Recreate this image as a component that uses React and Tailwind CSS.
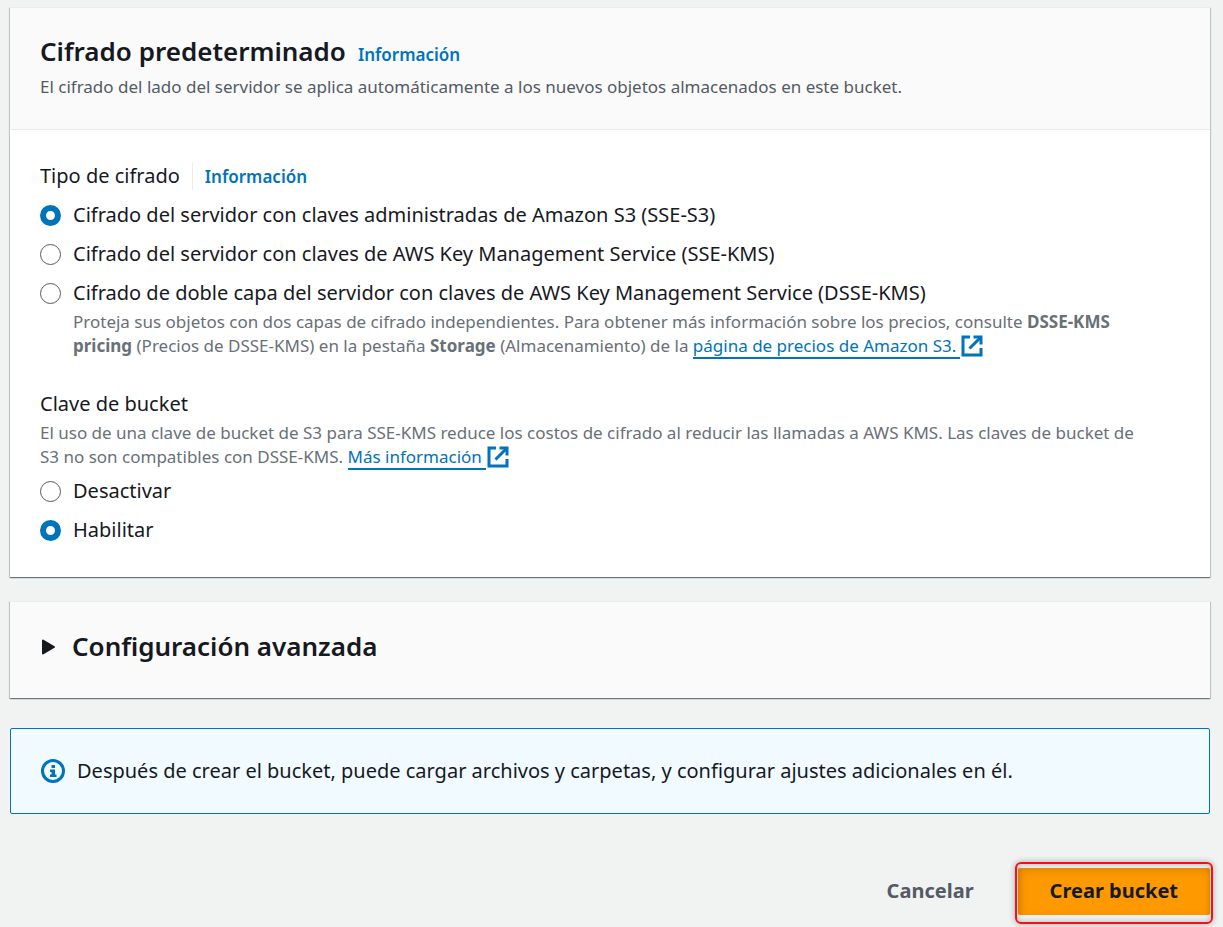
import React from "react";

function ExternalIcon() {
  return (
    <svg viewBox="0 0 22 22" className="inline-block h-[22px] w-[22px] align-[-5px]" fill="none" stroke="#0073bb" strokeWidth="3" aria-hidden="true">
      <path d="M9 2H2v18h18v-7" />
      <path d="M12.500 2H20v7.500" />
      <path d="M20 2 8.500 13.500" />
    </svg>
  );
}

function ExternalLink({ children }) {
  return (
    <a href="#" className="whitespace-nowrap text-[#0073bb]">
      <span className="mr-[1px] border-b-2 border-[#0073bb] pr-1">{children}</span>
      <ExternalIcon />
    </a>
  );
}

function Radio({ id, name, label, defaultChecked, children }) {
  return (
    <div className="flex gap-3">
      <input
        type="radio"
        id={id}
        name={name}
        defaultChecked={defaultChecked}
        className="mt-[5px] h-[21px] w-[21px] shrink-0 appearance-none rounded-full border border-[#545b64] bg-white checked:border-[6px] checked:border-[#0073bb]"
      />
      <div>
        <label htmlFor={id} className="block leading-[30px]">
          {label}
        </label>
        {children}
      </div>
    </div>
  );
}

const cardShadow =
  "shadow-[0_1px_1px_0_rgba(0,28,36,0.4),1px_1px_1px_0_rgba(0,28,36,0.15),-1px_1px_1px_0_rgba(0,28,36,0.15)]";

export default function App() {
  return (
    <main className="min-h-screen bg-[#f1f3f3] pt-[7px] pr-[13px] pb-3 pl-[10px] font-['Noto_Sans',sans-serif] text-[20px] text-[#16191f]">
      <section className={"bg-white " + cardShadow}>
        <header className="border-t border-b border-[#eaeded] bg-[#fafafa] px-[30px] pt-[25px] pb-[30px]">
          <div className="flex items-baseline gap-3 leading-[36px]">
            <h2 className="text-[26px] font-semibold">Cifrado predeterminado</h2>
            <a href="#" className="text-[17px] font-semibold text-[#0073bb]">
              Información
            </a>
          </div>
          <p className="mt-[2px] text-[17px] leading-6 text-[#545b64]">
            El cifrado del lado del servidor se aplica automáticamente a los nuevos objetos almacenados en este bucket.
          </p>
        </header>

        <div className="px-[30px] pt-[31px] pb-8">
          <fieldset>
            <legend className="flex items-baseline leading-[30px]">
              Tipo de cifrado
              <span className="ml-3 border-l border-[#eaeded] pl-3 leading-[26px]">
                <a href="#" className="text-[17px] font-semibold text-[#0073bb]">
                  Información
                </a>
              </span>
            </legend>
            <div className="mt-[9px] flex flex-col gap-[9px]">
              <Radio id="sse-s3" name="type" defaultChecked label="Cifrado del servidor con claves administradas de Amazon S3 (SSE-S3)" />
              <Radio id="sse-kms" name="type" label="Cifrado del servidor con claves de AWS Key Management Service (SSE-KMS)" />
              <Radio id="dsse-kms" name="type" label="Cifrado de doble capa del servidor con claves de AWS Key Management Service (DSSE-KMS)">
                <p className="mt-[2px] pr-8 text-[17px] leading-6 text-[#687078]">
                  Proteja sus objetos con dos capas de cifrado independientes. Para obtener más información sobre los precios, consulte{" "}
                  <b className="font-bold">DSSE-KMS pricing</b> (Precios de DSSE-KMS) en la pestaña{" "}
                  <b className="font-bold">Storage</b> (Almacenamiento) de la{" "}
                  <ExternalLink>página de precios de Amazon S3.</ExternalLink>
                </p>
              </Radio>
            </div>
          </fieldset>

          <fieldset className="mt-[31px]">
            <legend className="leading-[30px]">Clave de bucket</legend>
            <p className="mt-[2px] pr-8 text-[17px] leading-6 text-[#687078]">
              El uso de una clave de bucket de S3 para SSE-KMS reduce los costos de cifrado al reducir las llamadas a AWS KMS. Las claves de bucket de S3 no son compatibles con DSSE-KMS. <ExternalLink>Más información</ExternalLink>
            </p>
            <div className="mt-[7px] flex flex-col gap-[9px]">
              <Radio id="key-off" name="bucket-key" label="Desactivar" />
              <Radio id="key-on" name="bucket-key" defaultChecked label="Habilitar" />
            </div>
          </fieldset>
        </div>
      </section>

      <section className={"mt-6 border-t border-[#eaeded] bg-[#fafafa] " + cardShadow}>
        <h2>
          <button type="button" aria-expanded="false" className="flex w-full items-center gap-4 px-[30px] pt-[26px] pb-[34px] text-left text-[26px] leading-[36px] font-semibold">
            <svg viewBox="0 0 16 18" className="h-[18px] w-4" aria-hidden="true">
              <path d="M3 3.500 14 10 3 16.500z" fill="#16191f" stroke="#16191f" strokeWidth="2" strokeLinejoin="round" />
            </svg>
            Configuración avanzada
          </button>
        </h2>
      </section>

      <div role="status" className="mt-[30px] flex items-center gap-3 rounded-[2px] border border-[#0073bb] bg-[#f1faff] px-[30px] py-[27px] leading-[30px]">
        <svg viewBox="0 0 24 24" className="h-6 w-6 shrink-0" aria-hidden="true">
          <circle cx="12" cy="12" r="10.500" fill="none" stroke="#0073bb" strokeWidth="3" />
          <path d="M10.500 6h3.500v3h-3.500zM9 10.500h5v5h1.500V18H9v-2.500h1.500V13H9z" fill="#0073bb" />
        </svg>
        <p>Después de crear el bucket, puede cargar archivos y carpetas, y configurar ajustes adicionales en él.</p>
      </div>

      <div className="mt-[54px] flex items-center justify-end gap-3">
        <button type="button" className="h-[47px] px-8 pb-[2px] font-bold text-[#545b64]">
          Cancelar
        </button>
        <button
          type="button"
          className="relative h-[47px] rounded-[2px] bg-[#ff9900] px-8 pb-[2px] font-bold shadow-[inset_3px_3px_8px_rgba(120,70,0,0.2)]"
        >
          Crear bucket
          <span aria-hidden="true" className="absolute -inset-x-[3px] -top-[6px] -bottom-[9px] rounded-[6px] border-2 border-[#fb0d14] shadow-[0_0_6px_rgba(0,0,0,0.3),inset_0_0_6px_rgba(0,0,0,0.25)]" />
        </button>
      </div>
    </main>
  );
}
